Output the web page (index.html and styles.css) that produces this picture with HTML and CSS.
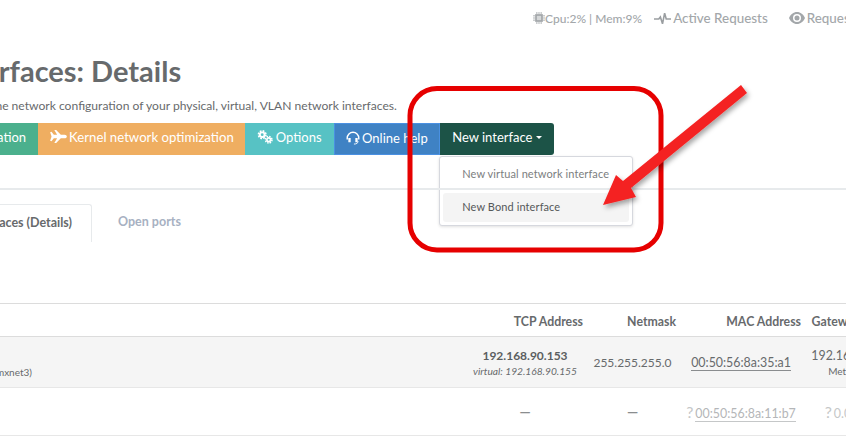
FILE: index.html
```html
<!DOCTYPE html>
<html lang="en">
<head>
<meta charset="utf-8">
<title>Network Interfaces: Details</title>
<link rel="stylesheet" href="styles.css">
</head>
<body>
<div class="page">
  <header class="topbar">
    <span class="stat">
      <svg class="ico" viewBox="0 0 14 14"><path d="M2.500 2.500h9v9h-9z" fill="#a3a7aa"/><path d="M4.500 4.500h5v5h-5z" fill="#d5d7d8"/><path d="M0 4.500h14M0 7h14M0 9.500h14M4.500 0v14M7 0v14M9.500 0v14" stroke="#a3a7aa" stroke-width="1" stroke-dasharray="2.500 9 2.500"/></svg>Cpu:2% | Mem:9%
    </span>
    <span class="stat stat-wide">
      <svg class="ico ico-wave" viewBox="0 0 16 14"><path d="M0 7.500h4.500l1.500-2 2 6.500 2-10 1.500 5.500h4.500" fill="none" stroke="#9a9ea1" stroke-width="1.500"/></svg>Active Requests
    </span>
    <span class="stat stat-wide">
      <svg class="ico ico-eye" viewBox="0 0 16 12"><path fill-rule="evenodd" d="M8 0c3.500 0 6.500 2.500 8 6-1.500 3.500-4.500 6-8 6s-6.500-2.500-8-6c1.500-3.500 4.500-6 8-6zm0 2a4 4 0 1 0 0 8 4 4 0 0 0 0-8zm0 1.500a2.500 2.500 0 1 1 0 5 2.500 2.500 0 0 1 0-5z" fill="#a3a7aa"/></svg>Requests
    </span>
  </header>

  <h1 class="title">Network Interfaces: Details</h1>
  <p class="lead">This section lists and changes the network configuration of your physical, virtual, VLAN network interfaces.</p>

  <div class="toolbar">
    <span class="btn btn-green">Network virtualization</span>
    <span class="btn btn-orange">
      <svg class="ico-btn ico-plane" viewBox="0 0 18 14"><path d="M0 2.500l1.500-.5 2.500 3h3.500L4.500 0h2l5 5h4c1.500 0 2.500 1 2.500 2s-1 2-2.500 2h-4l-5 5h-2l3-5H4l-2.500 3L0 11.500 1.500 7z" fill="#fff"/></svg>Kernel network optimization
    </span>
    <span class="btn btn-teal">
      <svg class="ico-btn ico-cogs" viewBox="0 0 17 15"><g fill="none" stroke="#fff"><circle cx="5.500" cy="5" r="2.500" stroke-width="2"/><circle cx="5.500" cy="5" r="4" stroke-width="1.800" stroke-dasharray="1.900 1.240"/><circle cx="12.500" cy="10.500" r="2" stroke-width="1.800"/><circle cx="12.500" cy="10.500" r="3.500" stroke-width="1.600" stroke-dasharray="1.600 1.150"/></g></svg>Options
    </span>
    <span class="btn btn-blue">
      <svg class="ico-btn ico-head" viewBox="0 0 15 15"><path d="M1.300 9V7.500a6.200 6.200 0 0 1 12.400 0V9" fill="none" stroke="#fff" stroke-width="1.500"/><path d="M2.500 7.500h2.500v4.500H2.500zM10 7.500h2.500v4.500H10z" fill="#fff"/><path d="M13 11c0 2-2 3-4.500 3" fill="none" stroke="#fff" stroke-width="1"/></svg>Online help
    </span>
    <div class="dropdown">
      <span class="btn btn-dark">New interface<i class="caret"></i></span>
      <ul class="menu">
        <li class="menu-item">New virtual network interface</li>
        <li class="menu-item menu-item-active">New Bond interface</li>
      </ul>
    </div>
  </div>

  <nav class="tabs">
    <span class="tab tab-active">Network Interfaces (Details)</span>
    <span class="tab">Open ports</span>
  </nav>

  <table class="grid">
    <colgroup>
      <col class="c-name"><col class="c-tcp"><col class="c-mask"><col class="c-mac"><col class="c-gw">
    </colgroup>
    <thead>
      <tr>
        <th></th>
        <th class="h-tcp">TCP Address</th>
        <th class="h-mask">Netmask</th>
        <th class="h-mac">MAC Address</th>
        <th class="h-gw">Gateway</th>
      </tr>
    </thead>
    <tbody>
      <tr class="row-on">
        <td class="name"><span class="name-sub">VMware Ethernet (vmxnet3)</span></td>
        <td><strong class="ip">192.168.90.153</strong><em class="sub">virtual: 192.168.90.155</em></td>
        <td class="mask">255.255.255.0</td>
        <td><a class="mac">00:50:56:8a:35:a1</a></td>
        <td class="gw-on">192.168.90.2<span class="sub-plain">Metric: 0</span></td>
      </tr>
      <tr class="row-off">
        <td></td>
        <td class="dash">—</td>
        <td class="dash">—</td>
        <td class="faint"><span class="q">?</span><a class="mac mac-off">00:50:56:8a:11:b7</a></td>
        <td class="faint"><span class="q">?</span>0.0.0.0</td>
      </tr>
    </tbody>
  </table>
</div>

<svg class="annot" viewBox="0 0 846 437" width="846" height="437">
  <defs>
    <filter id="sh" x="-20%" y="-20%" width="150%" height="150%"><feDropShadow dx="2" dy="3" stdDeviation="2.500" flood-color="#000" flood-opacity=".35"/></filter>
  </defs>
  <rect x="410" y="88.500" width="251" height="161.500" rx="27" fill="none" stroke="#e60000" stroke-width="5"/>
  <polygon points="741,85 747,93 631,188 636,197 603,205 616,175 623,181" fill="#f42222" filter="url(#sh)"/>
</svg>
</body>
</html>
```
FILE: styles.css
```css
* { box-sizing: border-box; }
html, body { margin: 0; height: 100%; overflow: hidden; background: #fff; }
body { width: 846px; height: 437px; position: relative; font-family: Lato, "Liberation Sans", sans-serif; color: #676a6c; font-size: 13px; }

.page { width: 1300px; margin-left: -204px; }

.topbar { display: flex; align-items: center; height: 36px; padding-left: 737px; color: #a3a7aa; font-size: 12px; white-space: nowrap; font-weight: 500; }
.stat { display: inline-flex; align-items: center; }
.stat-wide { margin-left: 12px; font-size: 13.400px; }
.stat-wide + .stat-wide { margin-left: 21px; }
.ico { width: 12px; height: 12px; margin-right: 0; }
.ico-wave { width: 17px; height: 15px; margin-right: 2px; }
.ico-eye { width: 16px; height: 12px; margin-right: 2px; }

.title { margin: 17px 0 0; padding-left: 31px; font-size: 29px; line-height: 36px; font-weight: 700; color: #676a6c; white-space: nowrap; }
.lead { margin: 9px 0 0; padding-left: 36px; font-size: 12.100px; line-height: 16px; white-space: nowrap; }

.toolbar { display: flex; margin-top: 9px; padding-left: 91px; position: relative; }
.btn { display: inline-flex; align-items: center; height: 32px; padding: 0 12px 5px; color: #fff; font-size: 13px; white-space: nowrap; }
.btn-green { background: #4bb08d; }
.btn-orange { background: #efae61; font-size: 13.200px; padding-right: 11px; }
.btn-orange .ico-btn { margin-right: 2px; }
.btn-teal { background: #57c2c4; }
.btn-blue { background: #3f82c4; border: 1px solid #4a90e2; padding: 0 11.500px 3px; }
.btn-dark { background: #1c5347; border-radius: 0 3px 3px 0; }
.ico-btn { margin-right: 3px; flex: none; }
.ico-plane { width: 17px; height: 13px; }
.ico-cogs { width: 16px; height: 14px; }
.ico-head { width: 14px; height: 14px; margin-right: 2px; }
.caret { width: 0; height: 0; margin-left: 4px; margin-top: 2px; border-left: 3px solid transparent; border-right: 3px solid transparent; border-top: 3px solid #fff; }

.dropdown { position: relative; }
.menu { position: absolute; left: -1px; top: 33px; width: 194px; height: 70px; margin: 0; padding: 4px 3px; list-style: none; background: #fff; border: 1px solid #d6d8de; border-radius: 3px; box-shadow: 0 1px 3px rgba(0,0,0,.12); }
.menu-item { height: 28px; margin-bottom: 4px; padding-left: 19px; line-height: 26px; font-size: 11px; letter-spacing: .1px; color: #7b7e80; white-space: nowrap; }
.menu-item-active { height: 29px; line-height: 28px; background: #f4f4f4; color: #55585a; border-radius: 3px; }

.tabs { display: flex; margin-top: 33px; height: 54px; padding-top: 14px; border-top: 2px solid #e7eaec; position: relative; }
.tab { height: 38px; padding: 0 20px; line-height: 36px; font-size: 12.500px; font-weight: 700; color: #a7b1c2; white-space: nowrap; }
.tab-active { color: #676a6c; width: 296px; border: 1px solid #e7eaec; border-bottom: 0; border-radius: 3px 3px 0 0; background: #fff; padding-left: 0; text-align: right; padding-right: 19px; }
.tab + .tab { margin-left: 6px; }
.tabs::after { content: ""; position: absolute; left: 0; right: 0; bottom: 0; height: 1px; background: #e7eaec; z-index: -1; }

.grid { width: 1098px; margin-top: 61px; border-collapse: collapse; table-layout: fixed; border-top: 1px solid #dcdcdc; font-size: 12.400px; }
.c-name { width: 669px; }
.c-tcp { width: 120px; }
.c-mask { width: 95px; }
.c-mac { width: 122px; }
.c-gw { width: 92px; }
.grid th { height: 33px; padding: 3px 0 0; text-align: right; font-weight: 700; font-size: 12.300px; color: #676a6c; border-bottom: 1px solid #dcdcdc; white-space: nowrap; }
.h-tcp { padding-right: 2px !important; }
.h-mask { padding-right: 4px !important; }
.h-mac { padding-right: 1px !important; }
.h-gw { padding-right: 34px !important; }
.grid td { padding: 0; text-align: center; vertical-align: middle; white-space: nowrap; border-bottom: 1px solid #e7e7e7; }
.row-on { height: 51px; background: #f5f5f5; }
.row-off { height: 48px; }
.name { text-align: right !important; padding-right: 433px !important; }
.name-sub { display: block; padding-top: 19px; font-size: 10px; }
.ip { display: block; font-size: 12px; font-weight: 700; color: #5b5e60; }
.sub { display: block; font-size: 10.200px; font-style: italic; margin-top: 2px; }
.sub-plain { display: block; font-size: 10px; margin-top: 2px; }
.mask { font-size: 12px; }
.mac { color: #676a6c; border-bottom: 1px solid #8a8d8f; }
.grid .dash { color: #8a8d8f; font-weight: 900; font-size: 14px; }
.faint { color: #c5c7c8; }
.q { font-size: 16px; margin-right: 2px; }
.mac-off { color: #b4b6b8; border-bottom-color: #c5c7c8; }

.annot { position: absolute; left: 0; top: 0; pointer-events: none; }
```
